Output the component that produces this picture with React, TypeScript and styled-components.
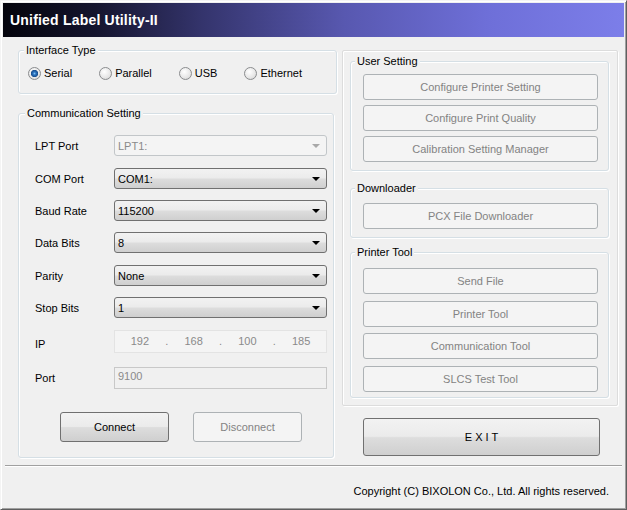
import React from 'react';
import styled, { createGlobalStyle } from 'styled-components';

const GlobalStyle = createGlobalStyle`
  html, body {
    margin: 0;
    padding: 0;
    background: #f0f0f0;
  }
  body {
    font-family: "Liberation Sans", Arial, sans-serif;
    font-size: 11px;
    color: #000;
  }
  * {
    box-sizing: border-box;
  }
`;

const fields = [
  { label: 'LPT Port', value: 'LPT1:', disabled: true, gap: 15 },
  { label: 'COM Port', value: 'COM1:', gap: 12 },
  { label: 'Baud Rate', value: '115200', gap: 11 },
  { label: 'Data Bits', value: '8', gap: 11 },
  { label: 'Parity', value: 'None', gap: 12 },
  { label: 'Stop Bits', value: '1', gap: 11 },
];

const interfaces = ['Serial', 'Parallel', 'USB', 'Ethernet'];

const App = () => {
  return (
    <>
      <GlobalStyle />
      <Window>
        <TitleBar>Unified Label Utility-II</TitleBar>

        <Main>
          <Column>
            <GroupBox>
              <Caption>Interface Type</Caption>
              <RadioRow>
                {interfaces.map((name, i) => (
                  <RadioOption key={name}>
                    <RadioCircle $checked={i === 0} />
                    {name}
                  </RadioOption>
                ))}
              </RadioRow>
            </GroupBox>

            <GroupBox $width={316} $top={19}>
              <Caption $offset={6}>Communication Setting</Caption>
              {fields.map((f) => (
                <FieldRow key={f.label} $gap={f.gap} $height={21}>
                  <FieldLabel>{f.label}</FieldLabel>
                  <Combo $disabled={f.disabled}>
                    {f.value}
                    <Arrow $disabled={f.disabled} />
                  </Combo>
                </FieldRow>
              ))}
              <FieldRow $gap={12} $height={23}>
                <FieldLabel $drop={4}>IP</FieldLabel>
                <IpBox>
                  <Octet>192</Octet>
                  <Dot>.</Dot>
                  <Octet>168</Octet>
                  <Dot>.</Dot>
                  <Octet>100</Octet>
                  <Dot>.</Dot>
                  <Octet>185</Octet>
                </IpBox>
              </FieldRow>
              <FieldRow $gap={14} $height={22}>
                <FieldLabel>Port</FieldLabel>
                <TextBox>9100</TextBox>
              </FieldRow>
              <ConnectRow>
                <PushButton $width={109} $height={30}>Connect</PushButton>
                <PushButton $width={109} $height={30} disabled>
                  Disconnect
                </PushButton>
              </ConnectRow>
            </GroupBox>
          </Column>

          <Column>
            <Panel>
              <GroupBox $top={0}>
                <Caption $offset={4}>User Setting</Caption>
                <ButtonStack $top={6} $gap={5} $bottom={8}>
                  <PushButton disabled>Configure Printer Setting</PushButton>
                  <PushButton disabled>Configure Print Quality</PushButton>
                  <PushButton disabled>Calibration Setting Manager</PushButton>
                </ButtonStack>
              </GroupBox>

              <GroupBox $top={17}>
                <Caption $offset={4}>Downloader</Caption>
                <ButtonStack $top={8} $gap={5} $bottom={8}>
                  <PushButton disabled>PCX File Downloader</PushButton>
                </ButtonStack>
              </GroupBox>

              <GroupBox $top={14}>
                <Caption $offset={4}>Printer Tool</Caption>
                <ButtonStack $top={9} $gap={6.7} $bottom={5}>
                  <PushButton disabled>Send File</PushButton>
                  <PushButton disabled>Printer Tool</PushButton>
                  <PushButton disabled>Communication Tool</PushButton>
                  <PushButton disabled>SLCS Test Tool</PushButton>
                </ButtonStack>
              </GroupBox>
            </Panel>

            <ExitButton>E X I T</ExitButton>
          </Column>
        </Main>

        <Separator />
        <Copyright>Copyright (C) BIXOLON Co., Ltd. All rights reserved.</Copyright>
      </Window>
    </>
  );
};

export default App;

const Window = styled.div`
  width: 627px;
  height: 510px;
  display: flex;
  flex-direction: column;
  padding: 2px;
  border: 1px solid;
  border-color: #f4f4f4 #5f5f5f #5f5f5f #f4f4f4;
  box-shadow: inset 1px 1px 0 #ffffff, inset -1px -1px 0 #a0a0a0;
  background: #f0f0f0;
`;

const TitleBar = styled.div`
  height: 34px;
  flex-shrink: 0;
  display: flex;
  align-items: center;
  padding-left: 7px;
  background: linear-gradient(
    to right,
    #04040c 0%,
    #15152e 15%,
    #34346c 32%,
    #5858b0 55%,
    #6e6fd8 78%,
    #7c7ee9 100%
  );
  color: #ffffff;
  font-size: 14px;
  font-weight: bold;
  letter-spacing: 0.2px;
`;

const Main = styled.div`
  display: grid;
  grid-template-columns: 319px 276px;
  column-gap: 5px;
  align-items: start;
  padding: 13px 0 0 15px;
`;

const Column = styled.div`
  display: flex;
  flex-direction: column;
  align-items: flex-start;
`;

const GroupBox = styled.div<{ $width?: number; $top?: number }>`
  display: flex;
  flex-direction: column;
  align-self: stretch;
  width: ${(p) => (p.$width ? `${p.$width}px` : 'auto')};
  margin-top: ${(p) => p.$top ?? 0}px;
  border: 1px solid #d5dfe5;
  border-radius: 3px;
  box-shadow: inset 1px 1px 0 #ffffff, 1px 1px 0 #ffffff;
`;

const Caption = styled.span<{ $offset?: number }>`
  align-self: flex-start;
  margin: -7px 0 0 ${(p) => p.$offset ?? 5}px;
  padding: 0 2px;
  line-height: 13px;
  background: #f0f0f0;
`;

const RadioRow = styled.div`
  display: flex;
  gap: 27px;
  margin: 10px 0 13px 9px;
`;

const RadioOption = styled.label`
  display: flex;
  align-items: center;
  gap: 3px;
  height: 13px;
  line-height: 13px;
`;

const RadioCircle = styled.span<{ $checked?: boolean }>`
  width: 13px;
  height: 13px;
  border-radius: 50%;
  border: 1px solid #8a8c8e;
  background: ${(p) =>
    p.$checked
      ? 'radial-gradient(circle at 50% 50%, #7fc0f0 0, #2a73c0 1.5px, #1a4d8c 3.4px, transparent 3.9px), radial-gradient(circle at 40% 35%, #ffffff 0%, #e4e4e4 65%, #cacaca 100%)'
      : 'radial-gradient(circle at 40% 35%, #ffffff 0%, #e4e4e4 65%, #cacaca 100%)'};
`;

const FieldRow = styled.div<{ $gap: number; $height: number }>`
  display: grid;
  grid-template-columns: 79px 213px;
  align-items: center;
  height: ${(p) => p.$height}px;
  margin: ${(p) => p.$gap}px 0 0 16px;
`;

const FieldLabel = styled.span<{ $drop?: number }>`
  padding-top: ${(p) => p.$drop ?? 0}px;
`;

const Combo = styled.div<{ $disabled?: boolean }>`
  height: 21px;
  display: flex;
  align-items: center;
  justify-content: space-between;
  padding: 0 6px 0 3px;
  border: 1px solid ${(p) => (p.$disabled ? '#c2c6c9' : '#707070')};
  border-radius: 3px;
  color: ${(p) => (p.$disabled ? '#8a8a8a' : '#000000')};
  background: ${(p) =>
    p.$disabled
      ? '#f4f4f4'
      : 'linear-gradient(to bottom, #f2f2f2 0%, #ebebeb 48%, #dddddd 52%, #cfcfcf 100%)'};
`;

const Arrow = styled.span<{ $disabled?: boolean }>`
  width: 0;
  height: 0;
  border-left: 4px solid transparent;
  border-right: 4px solid transparent;
  border-top: 4px solid ${(p) => (p.$disabled ? '#a8a8a8' : '#000000')};
  margin-top: 1px;
`;

const IpBox = styled.div`
  height: 23px;
  display: grid;
  grid-template-columns: 1fr auto 1fr auto 1fr auto 1fr;
  align-items: center;
  padding-bottom: 1px;
  border: 1px solid #e3e3e3;
  background: #f4f4f4;
  color: #8a8a8a;
`;

const Octet = styled.span`
  text-align: center;
`;

const Dot = styled.span`
  width: 4px;
  text-align: center;
`;

const TextBox = styled.div`
  height: 22px;
  padding: 2px 0 0 3px;
  border: 1px solid #c8c8c8;
  background: #f0f0f0;
  color: #8a8a8a;
`;

const ConnectRow = styled.div`
  display: flex;
  gap: 24px;
  margin: 23px 0 15px 41px;
`;

const PushButton = styled.button<{ $width?: number; $height?: number }>`
  width: ${(p) => (p.$width ? `${p.$width}px` : '100%')};
  height: ${(p) => p.$height ?? 26}px;
  padding: 0;
  font-family: inherit;
  font-size: 11px;
  color: #000000;
  border: 1px solid #707070;
  border-radius: 3px;
  background: linear-gradient(to bottom, #f2f2f2 0%, #ebebeb 48%, #dddddd 52%, #cfcfcf 100%);
  cursor: pointer;

  &:disabled {
    color: #838383;
    border-color: #adb2b5;
    background: #f4f4f4;
    cursor: default;
  }
`;

const Panel = styled.div`
  align-self: stretch;
  display: flex;
  flex-direction: column;
  padding: 10px 8px 7px 7px;
  border: 1px solid #dcdcdc;
  border-radius: 2px;
  box-shadow: inset 1px 1px 0 #ffffff, 1px 1px 0 #ffffff;
`;

const ButtonStack = styled.div<{ $top: number; $gap: number; $bottom: number }>`
  display: flex;
  flex-direction: column;
  gap: ${(p) => p.$gap}px;
  width: 235px;
  margin: ${(p) => p.$top}px 0 ${(p) => p.$bottom}px 12px;
`;

const ExitButton = styled(PushButton)`
  width: 237px;
  height: 38px;
  margin: 12px 0 0 21px;
  font-size: 11px;
`;

const Separator = styled.div`
  height: 2px;
  margin: 7px 2px 0;
  border-top: 1px solid #a0a0a0;
  border-bottom: 1px solid #ffffff;
`;

const Copyright = styled.div`
  margin-top: 18px;
  padding-right: 15px;
  text-align: right;
  line-height: 13px;
`;
